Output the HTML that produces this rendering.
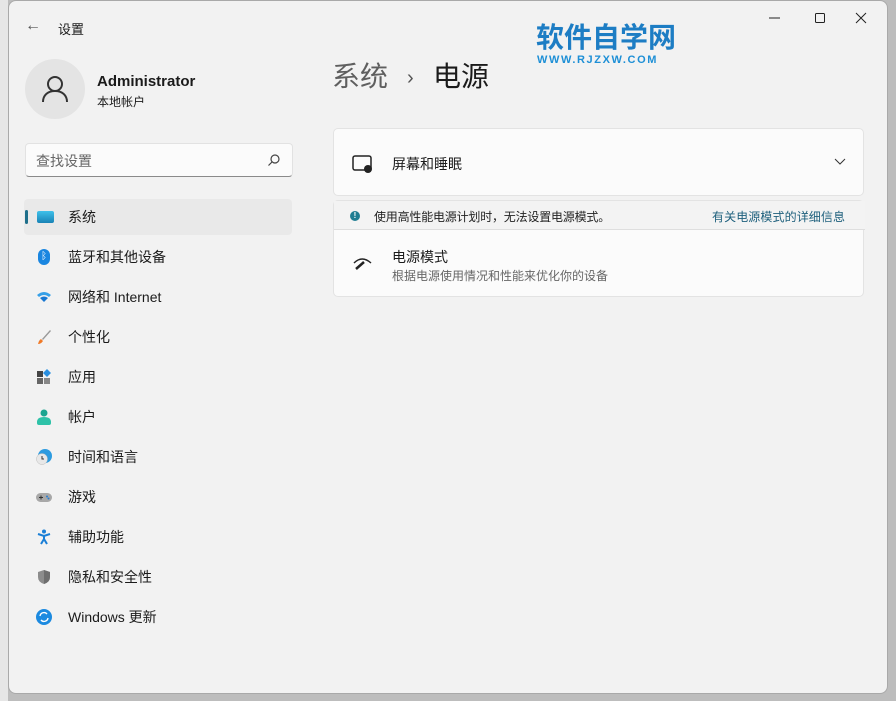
<!DOCTYPE html>
<html><head><meta charset="utf-8"><style>
*{box-sizing:border-box;margin:0;padding:0}
body{width:896px;height:701px;overflow:hidden;background:#bdbdbd;font-family:"Liberation Sans","Noto Sans CJK SC",sans-serif;position:relative;color:#1b1b1b}
.left{position:absolute;left:0;top:0;width:8px;height:701px;background:#e6e6e6}
.win{position:absolute;left:8px;top:0;width:880px;height:694px;background:#f2f2f2;border:1px solid #a9a9a9;border-radius:8px;overflow:hidden}
.abs{position:absolute}
.nav{position:absolute;left:15px;width:268px;height:36px;border-radius:4px;font-size:14px;line-height:36px}
.nav span.t{position:absolute;left:44px}
.nav .ic{position:absolute;left:12px;top:10px;width:16px;height:16px}
.card{position:absolute;left:324px;width:531px;background:#fbfbfb;border:1px solid #e3e3e3;border-radius:5px}
</style></head><body>
<div class="left"></div>
<div class="win">
 <div class="abs" style="left:16px;top:16px;font-size:16px;color:#555">←</div>
 <div class="abs" style="left:49px;top:18px;font-size:13px">设置</div>
 <svg class="abs" style="left:751px;top:10px" width="110" height="16"><line x1="9" y1="7" x2="20" y2="7" stroke="#222"/><rect x="55.5" y="2.5" width="9" height="9" fill="none" stroke="#222" rx="1"/><path d="M96 2l10 10M106 2l-10 10" stroke="#222"/></svg>
 <div class="abs" style="left:527px;top:20px;font-size:28px;font-weight:bold;color:#1d7dc4;line-height:34px">软件自学网</div>
 <div class="abs" style="left:528px;top:53px;font-size:11px;font-weight:bold;color:#1d8fd6;letter-spacing:1.6px">WWW.RJZXW.COM</div>
 <div class="abs" style="left:16px;top:58px;width:60px;height:60px;border-radius:50%;background:#e4e4e4"></div>
 <svg class="abs" style="left:30px;top:72px" width="32" height="32"><circle cx="16" cy="11" r="7" fill="none" stroke="#333" stroke-width="2"/><path d="M4 29c0-7 5-11 12-11s12 4 12 11" fill="none" stroke="#333" stroke-width="2"/></svg>
 <div class="abs" style="left:88px;top:72px;font-size:15px;font-weight:bold">Administrator</div>
 <div class="abs" style="left:88px;top:92px;font-size:12px">本地帐户</div>
 <div class="abs" style="left:16px;top:142px;width:268px;height:34px;background:#fbfbfb;border:1px solid #e2e2e2;border-bottom:1px solid #8a8a8a;border-radius:4px"></div>
 <div class="abs" style="left:27px;top:150px;font-size:14px;color:#666">查找设置</div>
 <svg class="abs" style="left:258px;top:152px" width="14" height="14"><circle cx="8" cy="6" r="4" fill="none" stroke="#444" stroke-width="1.2"/><line x1="5" y1="9" x2="1.5" y2="12.5" stroke="#444" stroke-width="1.2"/></svg>

 <div class="nav" style="top:198px;background:#e9e9e9"><div class="abs" style="left:1px;top:11px;width:3px;height:14px;border-radius:2px;background:#1f6f8b"></div><div class="ic" style="left:13px;top:12px;width:17px;height:12px;background:linear-gradient(#3fc1ea,#1983b6);border-radius:2px"></div><span class="t">系统</span></div>
 <div class="nav" style="top:238px"><div class="ic" style="left:14px;width:12px;height:16px;background:#1a86e0;border-radius:6px;color:#fff;font-size:10px;line-height:16px;text-align:center">ᛒ</div><span class="t">蓝牙和其他设备</span></div>
 <div class="nav" style="top:278px"><svg class="ic" viewBox="0 0 16 16"><path d="M1 6q7-6 14 0l-2 2q-5-4-10 0z" fill="#36a0e8"/><path d="M4 9q4-3 8 0l-4 4z" fill="#1777d1"/></svg><span class="t">网络和 Internet</span></div>
 <div class="nav" style="top:318px"><svg class="ic" viewBox="0 0 16 16"><path d="M14 1L6 10l1 1 8-9z" fill="#999"/><path d="M5 10l2 2q-2 3-5 3 1-4 3-5z" fill="#f07a28"/></svg><span class="t">个性化</span></div>
 <div class="nav" style="top:358px"><svg class="ic" viewBox="0 0 16 16"><rect x="1" y="2" width="6" height="6" fill="#444"/><rect x="1" y="9" width="6" height="6" fill="#666"/><rect x="8" y="9" width="6" height="6" fill="#888"/><path d="M11 0l4 4-4 4-4-4z" fill="#2a8fe0"/></svg><span class="t">应用</span></div>
 <div class="nav" style="top:398px"><svg class="ic" viewBox="0 0 16 16"><circle cx="8" cy="4" r="3.5" fill="#1aa590"/><path d="M1 13q0-5 7-5t7 5v1q0 2-2 2H3q-2 0-2-2z" fill="#2ec2a8"/></svg><span class="t">帐户</span></div>
 <div class="nav" style="top:438px"><svg class="ic" viewBox="0 0 16 16"><circle cx="9" cy="7" r="7" fill="#2c9be0"/><circle cx="6" cy="10" r="5.5" fill="#e8e8e8" stroke="#bbb" stroke-width=".5"/><path d="M6 7v3h2" stroke="#333" fill="none"/></svg><span class="t">时间和语言</span></div>
 <div class="nav" style="top:478px"><svg class="ic" viewBox="0 0 16 16"><rect x="0" y="4" width="16" height="9" rx="4.5" fill="#a8a8a8"/><path d="M3 8.5h4M5 6.5v4" stroke="#333"/><circle cx="11" cy="7.5" r="1" fill="#2a7fd0"/><circle cx="12.5" cy="9.5" r="1" fill="#2a7fd0"/></svg><span class="t">游戏</span></div>
 <div class="nav" style="top:518px"><svg class="ic" viewBox="0 0 16 16"><circle cx="8" cy="2.5" r="2" fill="#1a7fd6"/><path d="M2 5l6 2 6-2M8 7v3l-3 5M8 10l3 5" stroke="#1a7fd6" stroke-width="2" fill="none"/></svg><span class="t">辅助功能</span></div>
 <div class="nav" style="top:558px"><svg class="ic" viewBox="0 0 16 16"><path d="M8 1l6 2v5q0 5-6 7-6-2-6-7V3z" fill="#8c8c8c"/><path d="M8 1l6 2v5q0 5-6 7z" fill="#6e6e6e"/></svg><span class="t">隐私和安全性</span></div>
 <div class="nav" style="top:598px"><svg class="ic" viewBox="0 0 16 16"><circle cx="8" cy="8" r="8" fill="#1c8ae0"/><path d="M4 7a4 4 0 0 1 7-2M12 9a4 4 0 0 1-7 2" stroke="#fff" stroke-width="1.4" fill="none"/></svg><span class="t">Windows 更新</span></div>

 <div class="abs" style="left:323px;top:56px;font-size:28px;color:#5f5f5f;line-height:40px">系统</div>
 <div class="abs" style="left:398px;top:60px;font-size:20px;color:#555;line-height:34px">›</div>
 <div class="abs" style="left:424px;top:56px;font-size:28px;color:#1b1b1b;line-height:40px">电源</div>

 <div class="card" style="top:127px;height:68px">
  <svg class="abs" style="left:18px;top:26px" width="22" height="18"><rect x="1" y="1" width="18" height="14" rx="2" fill="none" stroke="#222" stroke-width="1.5"/><circle cx="16" cy="14" r="4" fill="#222"/></svg>
  <div class="abs" style="left:58px;top:25px;font-size:14px">屏幕和睡眠</div>
  <svg class="abs" style="left:500px;top:29px" width="12" height="8"><path d="M1 1l5 5 5-5" stroke="#333" fill="none"/></svg>
 </div>
 <div class="card" style="top:199px;height:97px;background:#fbfbfb">
  <div class="abs" style="left:0;top:0;width:531px;height:29px;background:#f3f3f3;border-bottom:1px solid #dedede"></div>
  <div class="abs" style="left:16px;top:10px;width:10px;height:10px;border-radius:50%;background:#207d92;color:#fff;font-size:8px;line-height:10px;text-align:center;font-weight:bold">!</div>
  <div class="abs" style="left:40px;top:7px;font-size:12px;color:#222;letter-spacing:-0.2px">使用高性能电源计划时，无法设置电源模式。</div>
  <div class="abs" style="left:378px;top:7px;font-size:12px;color:#1d5f7c;letter-spacing:0.1px">有关电源模式的详细信息</div>
  <svg class="abs" style="left:18px;top:54px" width="22" height="16"><path d="M2 8q8-8 17 0" stroke="#222" stroke-width="1.5" fill="none"/><path d="M4 14l8-7" stroke="#222" stroke-width="2.5"/></svg>
  <div class="abs" style="left:58px;top:46px;font-size:14px">电源模式</div>
  <div class="abs" style="left:58px;top:66px;font-size:12px;color:#666">根据电源使用情况和性能来优化你的设备</div>
 </div>
</div>
</body></html>
